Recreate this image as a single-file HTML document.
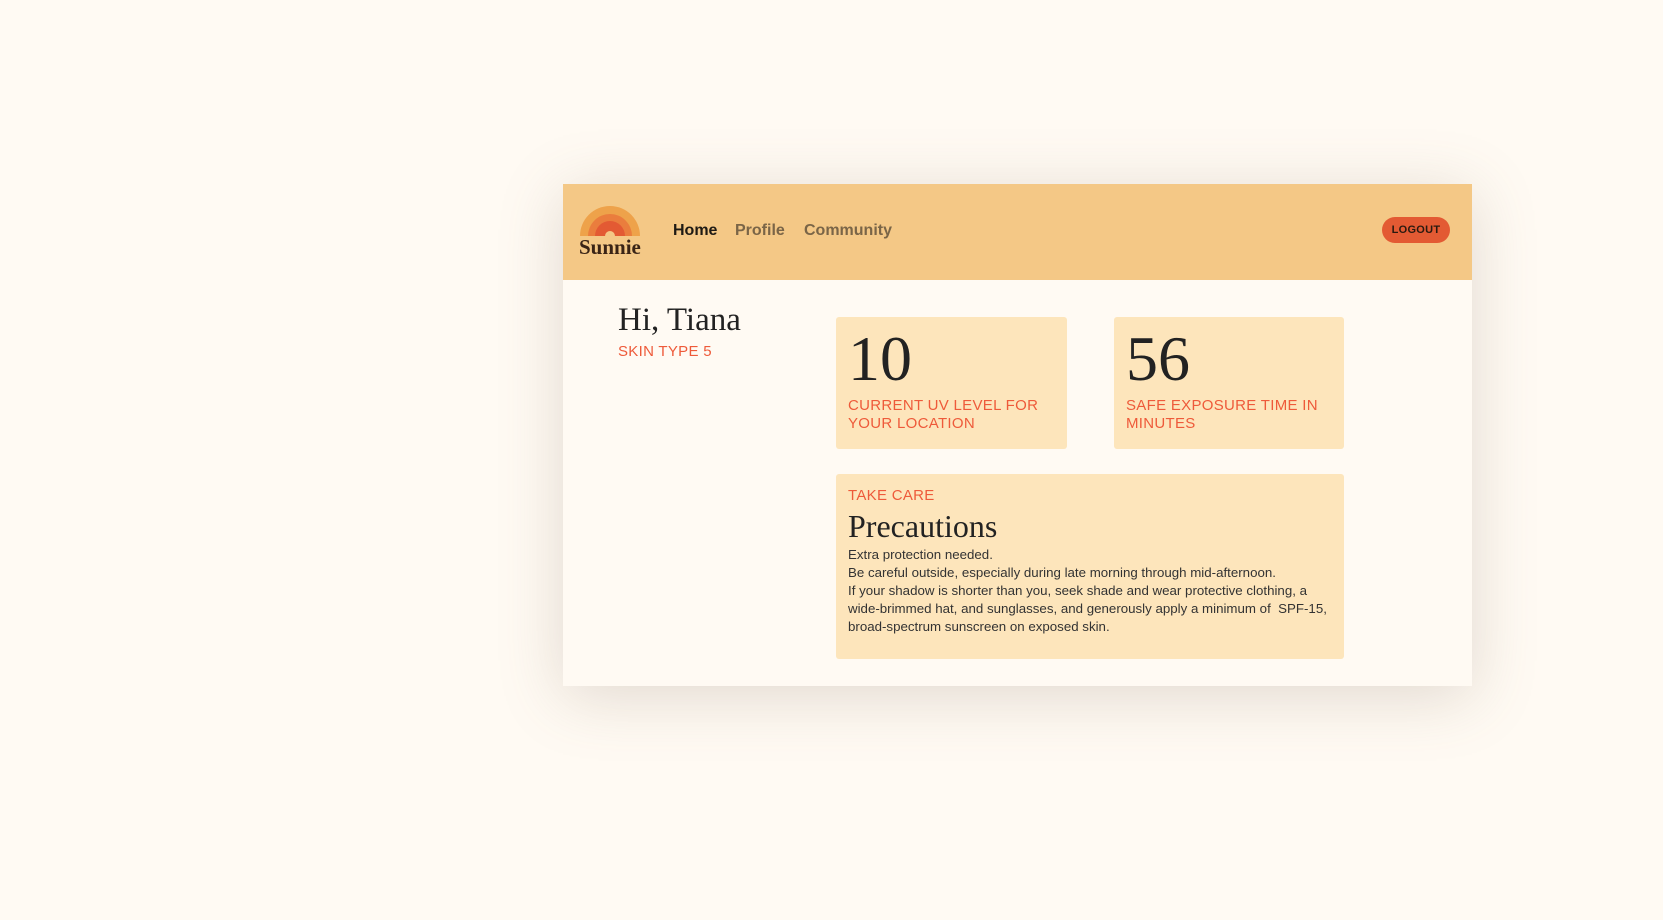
<!DOCTYPE html>
<html><head><meta charset="utf-8"><style>
*{margin:0;padding:0;box-sizing:border-box}
body{width:1663px;height:920px;background:#fffaf3;font-family:"Liberation Sans",sans-serif;position:relative;overflow:hidden}
.card{position:absolute;left:563px;top:184px;width:909px;height:502px;background:#fffaf3;box-shadow:0 10px 60px rgba(120,100,80,.22)}
.hdr{position:absolute;left:0;top:0;width:909px;height:96px;background:#f4c886}
.a{position:absolute;white-space:nowrap}
.nav{font-size:16px;font-weight:bold;color:#7a6547;top:38px}
.box{position:absolute;background:#fde5bb;border-radius:3px}
.serif{font-family:"Liberation Serif",serif;color:#222}
.red{color:#ee5a3a;font-size:15px;letter-spacing:.3px}
</style></head><body>
<div class="card">
 <div class="hdr">
  <svg class="a" style="left:17px;top:22px" width="60" height="32" viewBox="0 0 60 32">
   <path d="M0 30 A30 30 0 0 1 60 30 Z" fill="#eea24a"/>
   <path d="M8 30 A22 22 0 0 1 52 30 Z" fill="#ea7d3d"/>
   <path d="M15 30 A15 15 0 0 1 45 30 Z" fill="#e35a33"/>
   <path d="M25 30 A5 5 0 0 1 35 30 Z" fill="#f4c886"/>
  </svg>
  <div class="a serif" style="left:16px;top:51px;font-size:21px;font-weight:bold;color:#3a2416">Sunnie</div>
  <div class="a nav" style="left:110px;color:#1e1a14">Home</div>
  <div class="a nav" style="left:172px">Profile</div>
  <div class="a nav" style="left:241px">Community</div>
  <div class="a" style="left:819px;top:33px;width:68px;height:26px;border-radius:13px;background:#e35a33;color:#2a1a10;font-size:11px;font-weight:bold;text-align:center;line-height:26px;letter-spacing:.3px">LOGOUT</div>
 </div>
 <div class="a serif" style="left:55px;top:118px;font-size:33px">Hi, Tiana</div>
 <div class="a red" style="left:55px;top:159px">SKIN TYPE 5</div>
 <div class="box" style="left:273px;top:133px;width:231px;height:132px">
  <div class="a serif" style="left:12px;top:10px;font-size:64px;line-height:64px">10</div>
  <div class="a red" style="left:12px;top:80px;line-height:18px">CURRENT UV LEVEL FOR<br>YOUR LOCATION</div>
 </div>
 <div class="box" style="left:551px;top:133px;width:230px;height:132px">
  <div class="a serif" style="left:12px;top:10px;font-size:64px;line-height:64px">56</div>
  <div class="a red" style="left:12px;top:80px;line-height:18px">SAFE EXPOSURE TIME IN<br>MINUTES</div>
 </div>
 <div class="box" style="left:273px;top:290px;width:508px;height:185px">
  <div class="a red" style="left:12px;top:13px">TAKE CARE</div>
  <div class="a serif" style="left:12px;top:34px;font-size:32px">Precautions</div>
  <div class="a" style="left:12px;top:72px;font-size:13.3px;line-height:18px;color:#333">Extra protection needed.<br>Be careful outside, especially during late morning through mid-afternoon.<br>If your shadow is shorter than you, seek shade and wear protective clothing, a<br>wide-brimmed hat, and sunglasses, and generously apply a minimum of &nbsp;SPF-15,<br>broad-spectrum sunscreen on exposed skin.</div>
 </div>
</div>
</body></html>
